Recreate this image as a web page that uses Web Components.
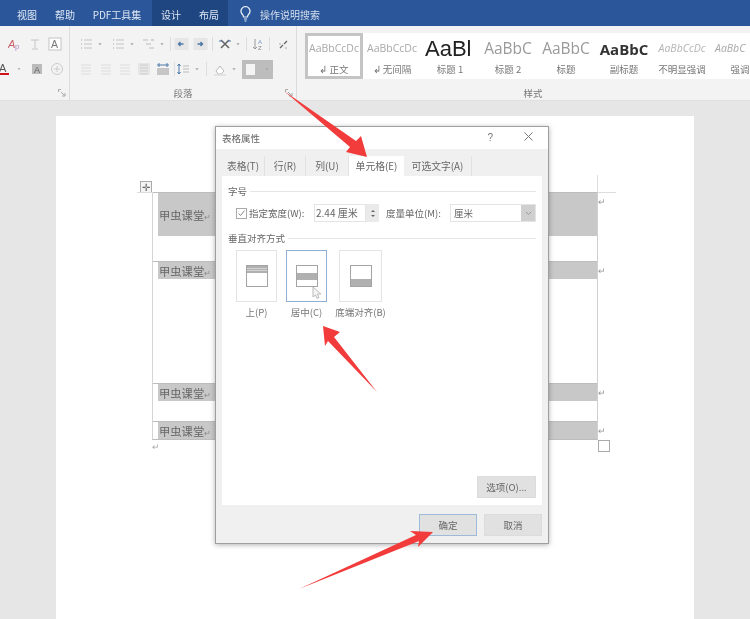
<!DOCTYPE html>
<html lang="zh">
<head>
<meta charset="utf-8">
<title>表格属性</title>
<style>
  html, body { margin: 0; padding: 0; background: #e6e6e6; }
  body { width: 750px; height: 619px; overflow: hidden; font-family: "Noto Sans CJK SC", "Liberation Sans", sans-serif; }
  word-app { filter: blur(0.55px); }
</style>
</head>
<body>
<template id="word-app-tpl">
  <style>
    :host { display: block; position: relative; width: 750px; height: 619px; overflow: hidden; background: #e6e6e6; }
  </style>
  <word-tabs></word-tabs>
  <word-ribbon></word-ribbon>
  <word-page></word-page>
  <table-dialog></table-dialog>
  <callout-arrows></callout-arrows>
</template>

<script>
// Маленькие глифы ленты, все в сетке 14x14
const L = (ys, x1, x2, c) => ys.map(y => `<path d="M${x1} ${y}H${x2}" stroke="${c}"/>`).join('');
const GLYPHS = {
  caret: `<path d="M5 6h4L7 8.5z" fill="#a5a5a5"/>`,
  ap: `<text x="0" y="11" font-size="11" font-family="Liberation Sans" font-style="italic" fill="#c8606a">A</text><text x="7" y="12" font-size="8" font-family="Liberation Sans" fill="#b08ac0">p</text>`,
  clear: `<path d="M3 3h8M7 3v8M4 12h6" stroke="#c4c4c4" fill="none"/>`,
  boxa: `<rect x="1" y="1" width="12" height="12" fill="#fff" stroke="#c4c4c4"/><text x="3" y="11" font-size="10.5" font-family="Liberation Sans" fill="#777">A</text>`,
  reda: `<text x="2" y="10" font-size="11" font-family="Liberation Sans" fill="#555">A</text><rect x="1" y="11" width="11" height="2" fill="#d0101a"/>`,
  graya: `<rect x="2" y="2" width="10" height="10" fill="#bbb"/><text x="4" y="11" font-size="9" font-family="Liberation Sans" fill="#666">A</text>`,
  circle: `<circle cx="7" cy="7" r="5.5" fill="none" stroke="#ccc"/><path d="M7 4v6M4 7h6" stroke="#ccc"/>`,
  bullets: `<path d="M2 3h1M2 7h1M2 11h1" stroke="#aaa"/>` + L([3, 7, 11], 5, 13, '#c4c4c4'),
  multi: `<path d="M1 3h5M4 7h5M7 11h5" stroke="#bdbdbd"/><path d="M9 3h3" stroke="#9db4cc"/>`,
  outdent: `<rect width="14" height="12" y="1" fill="#e6e6e6"/><path d="M9 7H4M6 5L4 7l2 2" stroke="#4a78a8" fill="none" stroke-width="1.4"/>`,
  indent: `<rect width="14" height="12" y="1" fill="#e6e6e6"/><path d="M4 7h5M7 5l2 2-2 2" stroke="#4a78a8" fill="none" stroke-width="1.4"/>`,
  cross: `<path d="M3 3l8 8M11 3l-8 8" stroke="#666" stroke-width="1.6"/><path d="M1 4h3M10 4h3" stroke="#4a78a8"/>`,
  sort: `<path d="M4 2v10M2 10l2 2 2-2" stroke="#999" fill="none"/><text x="7" y="7" font-size="6" font-family="Liberation Sans" fill="#7a9cc0">A</text><text x="7" y="13" font-size="6" font-family="Liberation Sans" fill="#888">Z</text>`,
  marks: `<path d="M4 11l3-3M8 7l3-3" stroke="#666" stroke-width="1.3"/><path d="M3 7h2M9 11h2" stroke="#aaa"/>`,
  left: L([3, 6, 9, 12], 2, 12, '#dcdcdc'),
  shade: `<rect x="1" y="1" width="12" height="12" fill="#e6e6e6"/>` + L([3, 6, 9, 12], 3, 11, '#cecece'),
  dist: `<path d="M1 3h12" stroke="#4a78a8"/><path d="M3 1v4M11 1v4" stroke="#4a78a8"/><rect x="1" y="6" width="12" height="7" fill="#c6c6c6"/>`,
  spacing: `<path d="M3 2v10M1.5 4L3 2l1.5 2M1.5 10L3 12l1.5-2" stroke="#4a78a8" fill="none"/>` + L([4, 7, 10], 7, 13, '#bbb'),
  fill: `<path d="M3 9l4-5 4 5-3 3H5z" fill="#fff" stroke="#bbb"/><path d="M1 13h12" stroke="#ddd" stroke-width="1.4"/>`,
};

class RbIcon extends HTMLElement {
  constructor() {
    super();
    this.attachShadow({ mode: 'open' });
    const w = this.getAttribute('w') || 14;
    const g = GLYPHS[this.getAttribute('g')] || '';
    this.shadowRoot.innerHTML = `<style>:host{display:block;height:14px;flex:none}svg{display:block}</style>
      <svg width="${w}" height="14" viewBox="0 0 14 14">${g}</svg>`;
  }
}

class IconRow extends HTMLElement {
  constructor() {
    super();
    this.attachShadow({ mode: 'open' });
    this.shadowRoot.innerHTML = `<style>:host{display:flex;align-items:center;height:22px}</style><slot></slot>`;
  }
}

class WordTabs extends HTMLElement {
  constructor() {
    super();
    this.attachShadow({ mode: 'open' });
    this.shadowRoot.innerHTML = `<style>
      :host { display: flex; height: 26px; background: #2b579a; color: #dfe8f4; font-size: 10px; align-items: stretch; padding-left: 8px; }
      .t { display: flex; align-items: center; justify-content: center; padding-top: 2px; box-sizing: border-box; white-space: nowrap; }
      .on { background: #1f4680; }
      .bulb { margin-left: 11px; align-self: center; }
      .search { margin-left: 8px; align-self: center; color: #d5dfee; padding-top: 2px; }
    </style>
    <div class="t" style="width:38px">视图</div>
    <div class="t" style="width:38px">帮助</div>
    <div class="t" style="width:66px">PDF工具集</div>
    <div class="t on" style="width:38px;margin-left:2px">设计</div>
    <div class="t on" style="width:38px">布局</div>
    <svg class="bulb" width="13" height="17" viewBox="0 0 13 17"><path d="M6.5 1.5a4.6 4.6 0 0 0-3 8c.8.8 1 1.5 1 2.5h4c0-1 .2-1.7 1-2.5a4.6 4.6 0 0 0-3-8z" fill="none" stroke="#e8eef7" stroke-width="1.2"/><path d="M5 14h3M5.5 16h2" stroke="#e8eef7"/></svg>
    <div class="search">操作说明搜索</div>`;
  }
}

class StyleCard extends HTMLElement {
  constructor() {
    super();
    this.attachShadow({ mode: 'open' });
    const sel = this.hasAttribute('selected');
    this.shadowRoot.innerHTML = `<style>
      :host { display: flex; flex-direction: column; align-items: center; width: 58px; height: 46px; box-sizing: border-box; flex: none; overflow: hidden; background: #fff; ${sel ? 'border: 3px solid #c4c4c4;' : 'padding: 3px;'} }
      .p { height: 26px; width: 52px; flex: none; line-height: 1.1; display: flex; align-items: center; justify-content: center; overflow: hidden; white-space: nowrap; font-family: "Open Sans", "Liberation Sans", sans-serif; }
      .l { font-size: 9.5px; color: #777; white-space: nowrap; line-height: 14px; }
    </style>
    <div class="p" style="${this.getAttribute('pv') || ''}">${this.getAttribute('text')}</div>
    <div class="l"><slot></slot></div>`;
  }
}

class WordRibbon extends HTMLElement {
  constructor() {
    super();
    this.attachShadow({ mode: 'open' });
    const ic = (g, ml = 0, w = 14) => `<rb-icon g="${g}" w="${w}" style="margin-left:${ml}px"></rb-icon>`;
    const sep = (ml, mr) => `<span style="width:1px;height:14px;background:#ddd;margin:0 ${mr}px 0 ${ml}px;flex:none"></span>`;
    const launcher = `<svg width="8" height="8" viewBox="0 0 8 8"><path d="M.5 3V.5H3" stroke="#aaa" fill="none"/><path d="M3 3l4 4M7 4v3H4" stroke="#aaa" fill="none"/></svg>`;
    this.shadowRoot.innerHTML = `<style>
      :host { display: flex; height: 74px; background: #f3f3f3; border-bottom: 1px solid #e0e0e0; overflow: hidden; }
      .grp { position: relative; flex: none; display: flex; flex-direction: column; height: 74px; box-sizing: border-box; border-right: 1px solid #dcdcdc; }
      .f { width: 70px; padding-top: 7px; }
      .p { width: 227px; padding-top: 7px; padding-left: 9px; }
      .s { flex: 1; padding-left: 8px; border-right: 0; }
      .rows { display: flex; flex-direction: column; gap: 3px; }
      .name { position: absolute; left: 0; right: 0; bottom: 0; height: 21px; line-height: 28px; text-align: center; font-size: 9.5px; color: #777; }
      .gal { display: flex; margin-top: 7px; height: 46px; background: #fff; }
      .launch { position: absolute; right: 3px; bottom: 3px; line-height: 0; }
      .box { display: flex; align-items: center; width: 31px; height: 19px; background: #bdbdbd; flex: none; margin-left: 2px; }
      .box i { width: 11px; height: 11px; background: #f4f4f4; margin-left: 4px; }
    </style>
    <div class="grp f">
      <div class="rows">
        <icon-row>${ic('ap', 8)}${ic('clear', 6)}${ic('boxa', 6)}</icon-row>
        <icon-row>${ic('reda', -3)}${ic('caret', 3, 10)}${ic('graya', 6)}${ic('circle', 6)}</icon-row>
      </div>
      <div class="launch">${launcher}</div>
    </div>
    <div class="grp p">
      <div class="rows">
        <icon-row>${ic('bullets')}${ic('caret', 1, 12)}${ic('bullets', 5)}${ic('caret', 1, 12)}${ic('multi', 4)}${ic('caret', 0, 12)}${sep(2, 2)}${ic('outdent', 0, 17)}${ic('indent', 2, 17)}${sep(3, 5)}${ic('cross')}${ic('caret', 0, 12)}${sep(2, 4)}${ic('sort')}${sep(4, 6)}${ic('marks')}</icon-row>
        <icon-row>${ic('left')}${ic('left', 6)}${ic('left', 5)}${ic('shade', 5)}${ic('dist', 5)}${sep(4, 1)}${ic('spacing', 0)}${ic('caret', 1, 12)}${sep(3, 6)}${ic('fill')}${ic('caret', 1, 12)}<span class="box"><i></i>${ic('caret', 6, 12)}</span></icon-row>
      </div>
      <div class="name">段落</div>
      <div class="launch">${launcher}</div>
    </div>
    <div class="grp s">
      <div class="gal">
        <style-card selected text="AaBbCcDc" pv="font-size:10.5px;color:#a8a8a8">↲ 正文</style-card>
        <style-card text="AaBbCcDc" pv="font-size:10.5px;color:#a8a8a8">↲ 无间隔</style-card>
        <style-card text="AaBl" pv="font-family:'Liberation Sans',sans-serif;font-size:22px;line-height:26px;color:#222;justify-content:flex-start;padding-left:2px">标题 1</style-card>
        <style-card text="AaBbC" pv="font-size:15.5px;color:#999">标题 2</style-card>
        <style-card text="AaBbC" pv="font-size:15.5px;color:#999">标题</style-card>
        <style-card text="AaBbC" pv="font-size:15px;color:#333;font-weight:700">副标题</style-card>
        <style-card text="AaBbCcDc" pv="font-size:10.5px;color:#b4b4b4;font-style:italic">不明显强调</style-card>
        <style-card text="AaBbC" pv="font-size:10.5px;color:#a8a8a8;font-style:italic;justify-content:flex-start;padding-left:2px">强调</style-card>
      </div>
      <div class="name">样式</div>
    </div>`;
  }
}

class TableRow extends HTMLElement {
  constructor() {
    super();
    this.attachShadow({ mode: 'open' });
    const h = this.getAttribute('h');
    const cell = this.getAttribute('cell');
    this.shadowRoot.innerHTML = `<style>
      :host { display: block; height: ${h}px; box-sizing: border-box; border-top: 1px solid #bdbdbd; padding-left: 5px; }
      .c { height: ${cell}px; background: #c8c8c8; display: flex; align-items: center; font-size: 11.3px; color: #666; position: relative; }
      .c span { margin-left: 1px; }
      .m { position: absolute; left: 100%; top: 0; margin-left: 1px; font-size: 9px; line-height: 17px; color: #999; }
    </style>
    <div class="c"><span>甲虫课堂<small style="font-size:8px;color:#888">↵</small></span><span class="m">↵</span></div>`;
  }
}

class WordPage extends HTMLElement {
  constructor() {
    super();
    this.attachShadow({ mode: 'open' });
    this.shadowRoot.innerHTML = `<style>
      :host { display: block; margin: 15px 56px 0; width: 638px; height: 504px; background: #fff; box-sizing: border-box; padding: 76px 96px 0 96px; position: relative; }
      .tbl { position: relative; border-left: 1px solid #d4d4d4; border-right: 1px solid #cfcfcf; border-bottom: 1px solid #bdbdbd; }
      .handle { position: absolute; left: -13px; top: -11px; width: 10px; height: 10px; border: 1px solid #aaa; background: #f4f4f4; font-size: 10px; line-height: 10px; text-align: center; color: #666; }
      .tl { position: absolute; left: -16px; top: 0; width: 16px; height: 1px; background: #ddd; }
      .tr { position: absolute; right: -19px; top: 0; width: 18px; height: 1px; background: #ddd; }
      .up { position: absolute; right: -1px; top: -17px; width: 1px; height: 17px; background: #ddd; }
      .resize { position: absolute; right: -13px; bottom: -13px; width: 10px; height: 10px; border: 1px solid #aaa; background: #fff; }
      .after { font-size: 9px; color: #aaa; line-height: 14px; height: 14px; }
    </style>
    <div class="tbl">
      <div class="handle">✛</div><div class="tl"></div><div class="tr"></div><div class="up"></div><div class="resize"></div>
      <table-row h="69" cell="43"></table-row>
      <table-row h="122" cell="17"></table-row>
      <table-row h="38" cell="17"></table-row>
      <table-row h="18" cell="17"></table-row>
    </div>
    <div class="after">↵</div>`;
  }
}

class DlgTab extends HTMLElement {
  constructor() {
    super();
    this.attachShadow({ mode: 'open' });
    const on = this.hasAttribute('active');
    this.shadowRoot.innerHTML = `<style>
      :host { display: flex; align-items: center; justify-content: center; height: 20px; box-sizing: border-box; font-size: 9.8px; color: #666; background: ${on ? '#fff' : '#f0f0f0'}; border-right: ${on ? 0 : '1px solid #e2e2e2'}; flex: none; white-space: nowrap; }
    </style><slot></slot>`;
  }
}

class AlignOption extends HTMLElement {
  constructor() {
    super();
    this.attachShadow({ mode: 'open' });
    const pos = this.getAttribute('pos');
    const y = { top: 1, mid: 8, bottom: 14 }[pos];
    const on = this.hasAttribute('selected');
    this.shadowRoot.innerHTML = `<style>
      :host { display: flex; flex-direction: column; align-items: center; flex: none; width: ${this.getAttribute('w') || 41}px; }
      .b { width: 100%; height: 52px; box-sizing: border-box; border: 1px solid ${on ? '#8fb0d2' : '#e4e4e4'}; ${on ? 'border-width:1.5px;' : ''} display: flex; align-items: center; justify-content: center; background: #fff; position: relative; }
      .l { font-size: 9.5px; color: #777; margin-top: 3px; line-height: 14px; white-space: nowrap; }
      svg { display: block; }
      .cur { position: absolute; left: 25px; top: 35px; }
    </style>
    <div class="b">
      <svg width="22" height="22" viewBox="0 0 22 22"><rect x=".5" y=".5" width="21" height="21" fill="#fff" stroke="#a4a4a4"/><rect x="1" y="${y}" width="20" height="7" fill="#b0b0b0"/>${pos === 'top' ? '<path d="M1 3.5h20M1 5.5h20" stroke="#d4d4d4"/>' : ''}</svg>
      ${on ? `<svg class="cur" width="10" height="14" viewBox="0 0 10 14"><path d="M1 1v10l2.5-2 1.5 3.5 2-1L5.5 8H9z" fill="#f4f4f4" stroke="#bbb"/></svg>` : ''}
    </div>
    <div class="l"><slot></slot></div>`;
  }
}

class DlgButton extends HTMLElement {
  constructor() {
    super();
    this.attachShadow({ mode: 'open' });
    const def = this.hasAttribute('default');
    this.shadowRoot.innerHTML = `<style>
      :host { display: flex; align-items: center; justify-content: center; height: 22px; width: ${this.getAttribute('w') || 58}px; box-sizing: border-box; background: #e1e1e1; border: 1px solid ${def ? '#9dbbd8' : '#dcdcdc'}; font-size: 9.5px; color: #666; flex: none; }
    </style><slot></slot>`;
  }
}

class TableDialog extends HTMLElement {
  constructor() {
    super();
    this.attachShadow({ mode: 'open' });
    this.shadowRoot.innerHTML = `<style>
      :host { position: absolute; left: 215px; top: 126px; width: 334px; height: 418px; box-sizing: border-box; border: 1px solid #9e9e9e; box-shadow: 0 1px 5px rgba(0,0,0,.3); background: #f0f0f0; display: flex; flex-direction: column; font-size: 9.5px; color: #666; }
      .title { height: 22px; background: #fff; display: flex; align-items: center; padding: 0 15px 0 6px; flex: none; }
      .title b { font-weight: 400; flex: 1; }
      .title span { color: #777; font-size: 10px; font-family: "Liberation Sans", sans-serif; line-height: 12px; }
      .title span + span { margin-left: 31px; }
      .tabs { display: flex; margin: 7px 6px 0; height: 20px; flex: none; }
      .panel { background: #fff; margin: 0 6px; height: 329px; flex: none; box-sizing: border-box; padding: 8px 6px 0; display: flex; flex-direction: column; }
      .group { display: flex; align-items: center; gap: 3px; height: 14px; white-space: nowrap; }
      .group::after { content: ""; flex: 1; height: 1px; background: #e6e6e6; }
      .form { display: flex; align-items: center; height: 18px; margin: 6px 0 0 8px; white-space: nowrap; }
      .cb { width: 9px; height: 9px; border: 1px solid #aaa; position: relative; flex: none; }
      .cb svg { position: absolute; left: 0; top: 0; }
      .input { width: 52px; height: 18px; box-sizing: border-box; border: 1px solid #e4e4e4; line-height: 16px; padding-left: 1px; font-size: 10px; flex: none; }
      .spin { width: 13px; height: 18px; background: #eaeaea; display: flex; flex-direction: column; align-items: center; justify-content: center; gap: 3px; flex: none; }
      .spin i { width: 0; height: 0; border: 2.5px solid transparent; }
      .select { width: 86px; height: 18px; box-sizing: border-box; border: 1px solid #e4e4e4; display: flex; align-items: center; justify-content: space-between; padding-left: 3px; flex: none; }
      .select i { width: 14px; height: 16px; background: #cfcfcf; display: flex; align-items: center; justify-content: center; }
      .opts { display: flex; margin: 5px 0 0 8px; gap: 9px; }
      .grow { flex: 1; }
      .panel-foot { display: flex; justify-content: flex-end; padding: 0 0 7px; }
      .foot { display: flex; justify-content: flex-end; gap: 7px; margin: 9px 6px 0 0; }
    </style>
    <div class="title"><b>表格属性</b><span>?</span><span><svg width="9" height="9" viewBox="0 0 9 9"><path d="M.5.5l8 8M8.5.5l-8 8" stroke="#777"/></svg></span></div>
    <div class="tabs">
      <dlg-tab style="width:43px">表格(T)</dlg-tab>
      <dlg-tab style="width:41px">行(R)</dlg-tab>
      <dlg-tab style="width:43px">列(U)</dlg-tab>
      <dlg-tab active style="width:55px">单元格(E)</dlg-tab>
      <dlg-tab style="width:68px">可选文字(A)</dlg-tab>
    </div>
    <div class="panel">
      <div class="group">字号</div>
      <div class="form">
        <span class="cb"><svg width="9" height="9" viewBox="0 0 9 9"><path d="M1.5 4.5l2 2 4-5" stroke="#888" fill="none"/></svg></span>
        <span style="margin-left:2px;width:65px">指定宽度(W):</span>
        <span class="input">2.44 厘米</span>
        <span class="spin"><i style="border-bottom-color:#666;border-top:0"></i><i style="border-top-color:#666;border-bottom:0"></i></span>
        <span style="margin-left:7px;width:64px">度量单位(M):</span>
        <span class="select">厘米<i><svg width="7" height="5" viewBox="0 0 7 5"><path d="M1 1l2.5 2.5L6 1" stroke="#999" fill="none"/></svg></i></span>
      </div>
      <div class="group" style="margin-top:9px">垂直对齐方式</div>
      <div class="opts">
        <align-option pos="top">上(P)</align-option>
        <align-option pos="mid" selected>居中(C)</align-option>
        <align-option pos="bottom" w="43" style="margin-left:3px">底端对齐(B)</align-option>
      </div>
      <div class="grow"></div>
      <div class="panel-foot"><dlg-button w="59">选项(O)...</dlg-button></div>
    </div>
    <div class="foot">
      <dlg-button default>确定</dlg-button>
      <dlg-button>取消</dlg-button>
    </div>`;
  }
}

class CalloutArrows extends HTMLElement {
  constructor() {
    super();
    this.attachShadow({ mode: 'open' });
    this.shadowRoot.innerHTML = `<style>
      :host { position: absolute; inset: 0; pointer-events: none; }
      svg { display: block; }
    </style>
    <svg width="750" height="619" viewBox="0 0 750 619">
      <g fill="#f23b3b">
        <polygon points="284,91 356,141 361,136 367,157 346,152 350,147"/>
        <polygon points="323,326 340,332 334,337 377,392 328,341 325,346"/>
        <polygon points="433,532 418,547 419,541 299,589 416,535 410,531"/>
      </g>
    </svg>`;
  }
}

class WordApp extends HTMLElement {
  constructor() {
    super();
    this.attachShadow({ mode: 'open' });
    this.shadowRoot.appendChild(document.getElementById('word-app-tpl').content.cloneNode(true));
  }
}

customElements.define('rb-icon', RbIcon);
customElements.define('icon-row', IconRow);
customElements.define('word-tabs', WordTabs);
customElements.define('style-card', StyleCard);
customElements.define('word-ribbon', WordRibbon);
customElements.define('table-row', TableRow);
customElements.define('word-page', WordPage);
customElements.define('dlg-tab', DlgTab);
customElements.define('align-option', AlignOption);
customElements.define('dlg-button', DlgButton);
customElements.define('table-dialog', TableDialog);
customElements.define('callout-arrows', CalloutArrows);
customElements.define('word-app', WordApp);
</script>
<word-app></word-app>
</body>
</html>
